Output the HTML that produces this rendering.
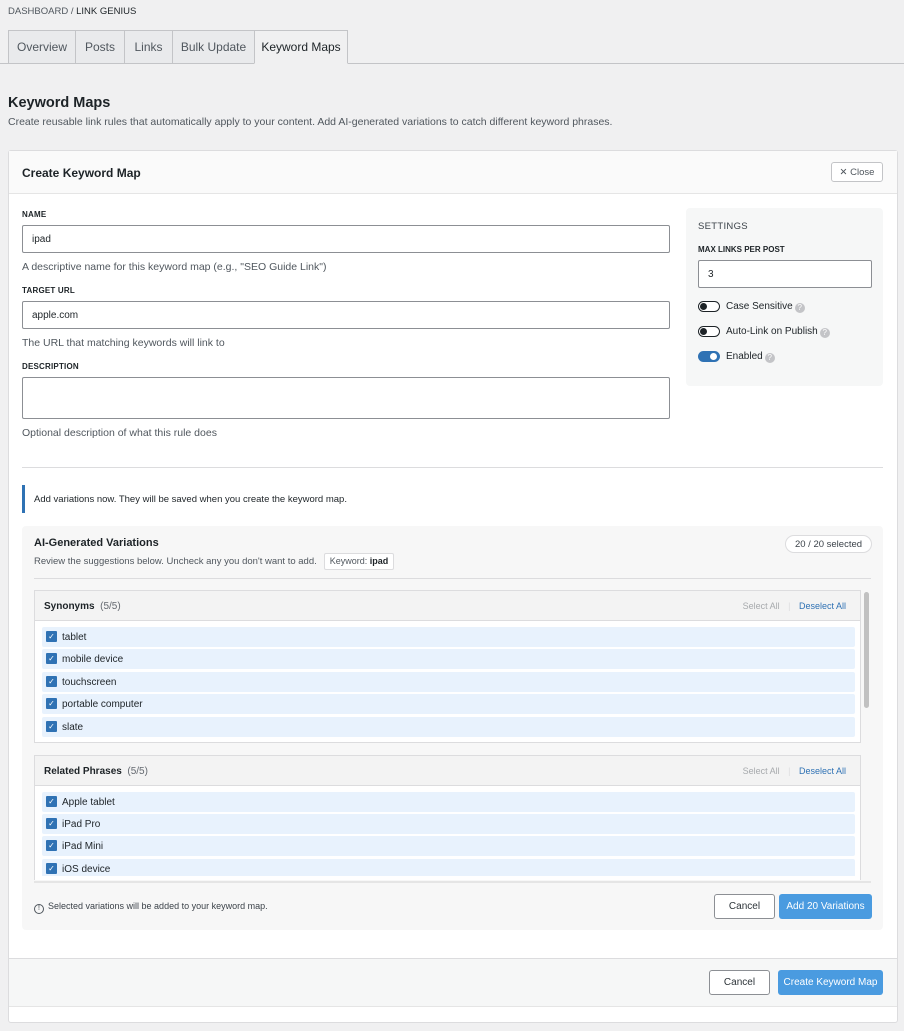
<!DOCTYPE html>
<html><head><style>
*{box-sizing:border-box;margin:0;padding:0}
body{width:904px;height:1031px;background:#f0f0f1;font-family:"Liberation Sans",sans-serif;color:#1d2327;position:relative;overflow:hidden;font-size:11px}
.a{position:absolute}
.tab{position:absolute;top:30px;height:34px;border:1px solid #c3c4c7;background:#e9eaec;color:#50575e;font-size:12px;line-height:32px;text-align:center}
.lbl{position:absolute;left:22px;font-size:8px;font-weight:bold;letter-spacing:.2px;color:#1d2327}
.inp{position:absolute;left:22px;width:648px;border:1px solid #8c8f94;background:#fff;border-radius:2px;font-size:10px;padding-left:9px}
.help{position:absolute;left:22px;font-size:10.5px;color:#50575e}
.tg{position:absolute;left:698px;width:22px;height:11px;border:1.5px solid #1d2327;border-radius:6px;background:#fff}
.tg i{position:absolute;left:1px;top:1px;width:7px;height:7px;border-radius:50%;background:#1d2327}
.tgl{position:absolute;left:726px;font-size:10px}
.q{display:inline-block;width:10px;height:10px;border-radius:50%;background:#c3c4c7;color:#fff;font-size:8px;line-height:10px;text-align:center;vertical-align:-1px;margin-left:2px}
.it{position:absolute;left:42px;width:813px;height:20px;background:#e8f2fd;border-radius:2px;font-size:10px;line-height:21px;padding-left:20px}
.it:before{content:"✓";position:absolute;left:4px;top:4px;width:11px;height:11px;background:#2f72b4;color:#fff;font-size:8px;line-height:11px;text-align:center;border-radius:1px}
.gh{position:absolute;left:34px;width:827px;height:31px;background:#f3f3f3;border:1px solid #dcdcde;font-size:10px;line-height:31px;padding-left:9px}
.gh b{font-weight:bold}
.gh span{color:#646970}
.gh .r{position:absolute;right:14px;top:0;font-size:9px}
.btn{position:absolute;font-size:10px;border-radius:3px;display:flex;align-items:center;justify-content:center}
.c{border:1px solid #8c8f94;background:#fff;color:#2c3338}
.p{background:#4a9be0;color:#fff}
</style></head><body>
<div class="a" style="left:8px;top:6px;font-size:9.5px;color:#50575e">DASHBOARD / <span style="color:#1d2327">LINK GENIUS</span></div>
<div class="a" style="left:0;top:63px;width:904px;height:1px;background:#c3c4c7"></div>
<div class="tab" style="left:8px;width:68px">Overview</div>
<div class="tab" style="left:75px;width:50px">Posts</div>
<div class="tab" style="left:124px;width:49px">Links</div>
<div class="tab" style="left:172px;width:83px">Bulk Update</div>
<div class="tab" style="left:254px;width:94px;background:#f0f0f1;border-bottom-color:#f0f0f1;color:#1d2327">Keyword Maps</div>
<div class="a" style="left:8px;top:95px;font-size:14.5px;font-weight:bold">Keyword Maps</div>
<div class="a" style="left:8px;top:116px;font-size:10.5px;color:#50575e">Create reusable link rules that automatically apply to your content. Add AI-generated variations to catch different keyword phrases.</div>

<div class="a" style="left:8px;top:150px;width:890px;height:873px;background:#fff;border:1px solid #dcdcde;border-radius:3px"></div>
<div class="a" style="left:9px;top:151px;width:888px;height:43px;background:#fafafa;border-bottom:1px solid #e5e5e5"></div>
<div class="a" style="left:22px;top:166px;font-size:12px;font-weight:bold">Create Keyword Map</div>
<div class="btn c" style="left:831px;top:162px;width:52px;height:20px;border-color:#c3c4c7;color:#50575e;font-size:9.5px">✕ Close</div>

<div class="lbl" style="top:210px">NAME</div>
<div class="inp" style="top:225px;height:28px;line-height:28px">ipad</div>
<div class="help" style="top:261px">A descriptive name for this keyword map (e.g., "SEO Guide Link")</div>
<div class="lbl" style="top:286px">TARGET URL</div>
<div class="inp" style="top:301px;height:28px;line-height:28px">apple.com</div>
<div class="help" style="top:337px">The URL that matching keywords will link to</div>
<div class="lbl" style="top:362px">DESCRIPTION</div>
<div class="inp" style="top:377px;height:42px"></div>
<div class="help" style="top:427px">Optional description of what this rule does</div>

<div class="a" style="left:686px;top:208px;width:197px;height:178px;background:#f6f7f7;border-radius:4px"></div>
<div class="a" style="left:698px;top:221px;font-size:9.5px;color:#3c434a;letter-spacing:.3px">SETTINGS</div>
<div class="a" style="left:698px;top:245px;font-size:8px;font-weight:bold">MAX LINKS PER POST</div>
<div class="a" style="left:698px;top:260px;width:174px;height:28px;border:1px solid #8c8f94;background:#fff;border-radius:2px;font-size:10px;line-height:28px;padding-left:9px">3</div>
<div class="tg" style="top:301px"><i></i></div><div class="tgl" style="top:301px">Case Sensitive<span class="q">?</span></div>
<div class="tg" style="top:326px"><i></i></div><div class="tgl" style="top:326px">Auto-Link on Publish<span class="q">?</span></div>
<div class="tg" style="top:351px;background:#2f72b4;border-color:#2f72b4"><i style="left:11px;background:#fff"></i></div><div class="tgl" style="top:351px">Enabled<span class="q">?</span></div>

<div class="a" style="left:22px;top:467px;width:861px;height:1px;background:#dcdcde"></div>
<div class="a" style="left:22px;top:485px;width:3px;height:28px;background:#2f72b4"></div>
<div class="a" style="left:34px;top:494px;font-size:9.5px">Add variations now. They will be saved when you create the keyword map.</div>

<div class="a" style="left:22px;top:526px;width:861px;height:404px;background:#f7f7f7;border-radius:4px"></div>
<div class="a" style="left:34px;top:537px;font-size:11px;font-weight:bold">AI-Generated Variations</div>
<div class="a" style="left:34px;top:556px;font-size:9.5px;color:#50575e">Review the suggestions below. Uncheck any you don't want to add.</div>
<div class="a" style="left:324px;top:553px;width:70px;height:17px;border:1px solid #dcdcde;background:#fff;border-radius:2px;font-size:9px;line-height:15px;text-align:center;color:#50575e">Keyword: <b style="color:#1d2327">ipad</b></div>
<div class="a" style="left:785px;top:535px;width:87px;height:18px;border:1px solid #dcdcde;background:#fff;border-radius:9px;font-size:9.5px;line-height:17px;text-align:center;color:#3c434a">20 / 20 selected</div>
<div class="a" style="left:34px;top:578px;width:837px;height:1px;background:#dcdcde"></div>

<div class="a" style="left:34px;top:590px;width:827px;height:153px;border:1px solid #dcdcde;border-top:0;background:#fff"></div>
<div class="gh" style="top:590px"><b>Synonyms</b> <span>&nbsp;(5/5)</span><div class="r"><span style="color:#a7aaad">Select All</span> <span style="color:#dcdcde;margin:0 6px">|</span> <span style="color:#2f72b4">Deselect All</span></div></div>
<div class="it" style="top:627px">tablet</div>
<div class="it" style="top:649px">mobile device</div>
<div class="it" style="top:672px">touchscreen</div>
<div class="it" style="top:694px">portable computer</div>
<div class="it" style="top:717px">slate</div>
<div class="a" style="left:34px;top:755px;width:827px;height:125px;border:1px solid #dcdcde;border-bottom:0;background:#fff"></div>
<div class="gh" style="top:755px"><b>Related Phrases</b> <span>&nbsp;(5/5)</span><div class="r"><span style="color:#a7aaad">Select All</span> <span style="color:#dcdcde;margin:0 6px">|</span> <span style="color:#2f72b4">Deselect All</span></div></div>
<div class="it" style="top:792px">Apple tablet</div>
<div class="it" style="top:814px">iPad Pro</div>
<div class="it" style="top:836px">iPad Mini</div>
<div class="a" style="left:34px;top:859px;width:827px;height:17px;overflow:hidden"><div class="it" style="left:8px;top:0">iOS device</div></div>
<div class="a" style="left:862px;top:590px;width:9px;height:290px;background:#f7f7f7"></div>
<div class="a" style="left:864px;top:592px;width:5px;height:116px;background:#c1c1c1;border-radius:3px"></div>
<div class="a" style="left:34px;top:881px;width:837px;height:2px;background:#e5e5e5"></div>
<div class="a" style="left:34px;top:901px;font-size:9px;color:#3c434a"><span style="display:inline-block;width:10px;height:10px;border:1px solid #50575e;border-radius:50%;font-size:7px;line-height:8px;text-align:center;vertical-align:-1px;margin-right:4px">!</span>Selected variations will be added to your keyword map.</div>
<div class="btn c" style="left:714px;top:894px;width:61px;height:25px">Cancel</div>
<div class="btn p" style="left:779px;top:894px;width:93px;height:25px">Add 20 Variations</div>

<div class="a" style="left:9px;top:958px;width:888px;height:49px;background:#f6f7f7;border-top:1px solid #dcdcde;border-bottom:1px solid #e5e5e5"></div>
<div class="btn c" style="left:709px;top:970px;width:61px;height:25px">Cancel</div>
<div class="btn p" style="left:778px;top:970px;width:105px;height:25px">Create Keyword Map</div>
</body></html>
